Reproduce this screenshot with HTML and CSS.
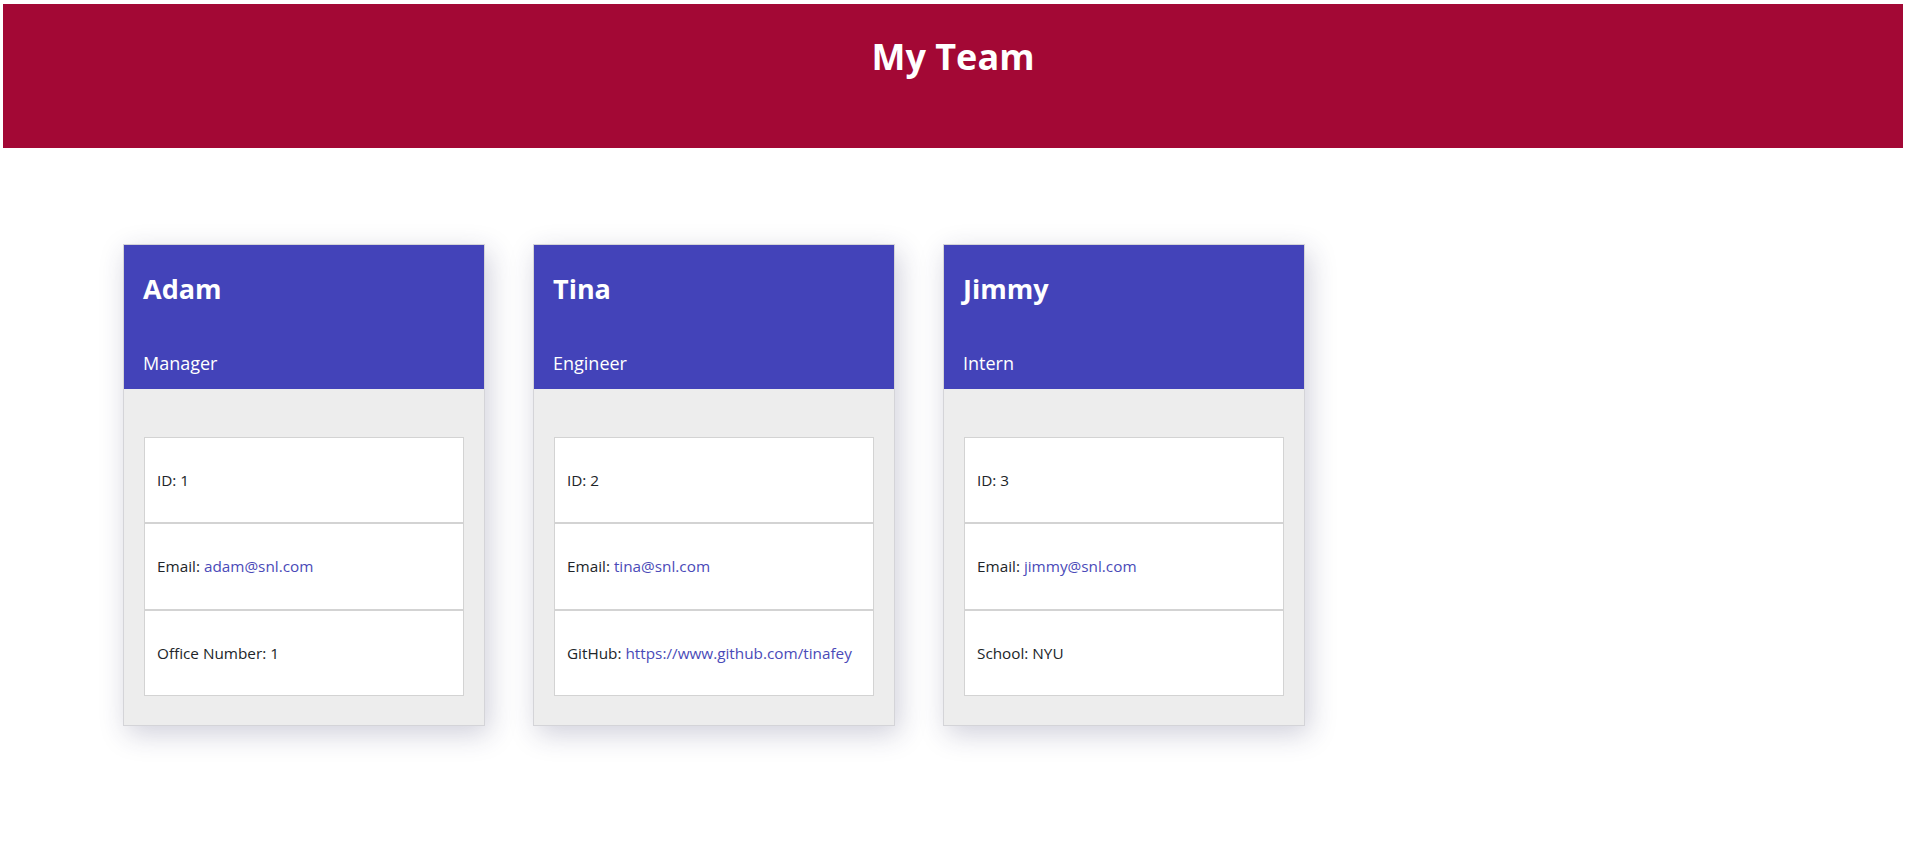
FILE: index.html
```html
<!DOCTYPE html>
<html lang="en">
<head>
<meta charset="utf-8">
<title>My Team</title>
<link rel="stylesheet" href="styles.css">
</head>
<body>
  <header class="jumbotron">
    <h1 class="jumbotron-title">My Team</h1>
  </header>
  <main class="team">
    <section class="card">
      <div class="card-header">
        <h3 class="card-name">Adam</h3>
        <h5 class="card-role">Manager</h5>
      </div>
      <div class="card-body">
        <ul class="list">
          <li class="list-item">ID: 1</li>
          <li class="list-item list-item-mid">Email:&nbsp;<a class="link" href="#">adam@snl.com</a></li>
          <li class="list-item">Office Number: 1</li>
        </ul>
      </div>
    </section>
    <section class="card">
      <div class="card-header">
        <h3 class="card-name">Tina</h3>
        <h5 class="card-role">Engineer</h5>
      </div>
      <div class="card-body">
        <ul class="list">
          <li class="list-item">ID: 2</li>
          <li class="list-item list-item-mid">Email:&nbsp;<a class="link" href="#">tina@snl.com</a></li>
          <li class="list-item">GitHub:&nbsp;<a class="link" href="#">https://www.github.com/tinafey</a></li>
        </ul>
      </div>
    </section>
    <section class="card">
      <div class="card-header">
        <h3 class="card-name">Jimmy</h3>
        <h5 class="card-role">Intern</h5>
      </div>
      <div class="card-body">
        <ul class="list">
          <li class="list-item">ID: 3</li>
          <li class="list-item list-item-mid">Email:&nbsp;<a class="link" href="#">jimmy@snl.com</a></li>
          <li class="list-item">School: NYU</li>
        </ul>
      </div>
    </section>
  </main>
</body>
</html>
```
FILE: styles.css
```css
* { box-sizing: border-box; }

html, body {
  margin: 0;
  padding: 0;
  background: #ffffff;
}

body {
  font-family: "Open Sans", "Noto Sans", "Liberation Sans", sans-serif;
  font-size: 15.3px;
  color: #212529;
  min-height: 844px;
}

.jumbotron {
  margin: 4px 6px 0 3px;
  height: 144px;
  padding-top: 31px;
  background: #a30835;
  text-align: center;
}

.jumbotron-title {
  margin: 0;
  font-size: 36px;
  font-weight: 700;
  line-height: 1.2;
  color: #ffffff;
}

.team {
  display: flex;
  align-items: flex-start;
  gap: 48px;
  padding: 96px 0 100px 123px;
}

.card {
  width: 362px;
  border: 1px solid #d4d4d8;
  background: #ededed;
  box-shadow: 4px 8px 26px rgba(40, 40, 90, 0.22);
}

.card-header {
  height: 144px;
  padding: 28px 19px 0 19px;
  background: #4343b9;
  color: #ffffff;
}

.card-name {
  margin: 0 0 48px 0;
  font-size: 27px;
  font-weight: 700;
  line-height: 1.2;
}

.card-role {
  margin: 0;
  font-size: 18px;
  font-weight: 400;
  line-height: 1.2;
}

.card-body {
  padding: 48px 20px 29px 20px;
}

.list {
  list-style: none;
  margin: 0;
  padding: 0;
}

.list-item {
  display: flex;
  align-items: center;
  height: 86px;
  padding: 0 12px;
  background: #ffffff;
  border: 1px solid #d3d3d3;
  line-height: 1.5;
}

.list-item-mid {
  height: 87px;
}

.link {
  color: #4a4ab8;
  text-decoration: none;
}
```
